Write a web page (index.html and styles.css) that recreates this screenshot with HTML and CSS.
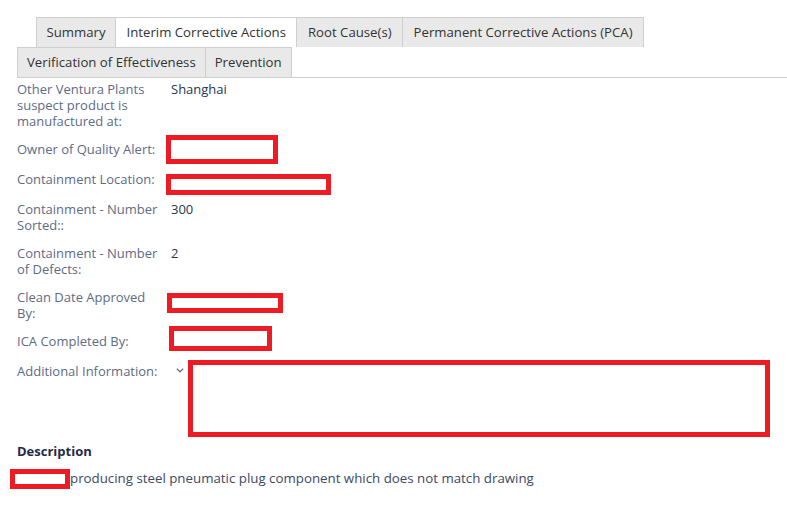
FILE: index.html
```html
<!DOCTYPE html>
<html>
<head>
<meta charset="utf-8">
<link rel="stylesheet" href="styles.css">
</head>
<body>
<div class="page">
  <div class="tabs">
    <div class="tab-row first">
      <div class="tab narrow">Summary</div>
      <div class="tab active">Interim Corrective Actions</div>
      <div class="tab">Root Cause(s)</div>
      <div class="tab">Permanent Corrective Actions (PCA)</div>
    </div>
    <div class="tab-row second">
      <div class="tab">Verification of Effectiveness</div>
      <div class="tab">Prevention</div>
    </div>
  </div>
  <div class="fields">
    <div class="row">
      <div class="label">Other Ventura Plants suspect product is manufactured at:</div>
      <div class="value">Shanghai</div>
    </div>
    <div class="row">
      <div class="label">Owner of Quality Alert:</div>
      <div class="value"><span class="redact r-owner"></span></div>
    </div>
    <div class="row">
      <div class="label">Containment Location:</div>
      <div class="value"><span class="redact r-loc"></span></div>
    </div>
    <div class="row">
      <div class="label">Containment - Number Sorted::</div>
      <div class="value">300</div>
    </div>
    <div class="row">
      <div class="label">Containment - Number of Defects:</div>
      <div class="value">2</div>
    </div>
    <div class="row">
      <div class="label">Clean Date Approved By:</div>
      <div class="value"><span class="redact r-clean"></span></div>
    </div>
    <div class="row">
      <div class="label">ICA Completed By:</div>
      <div class="value"><span class="redact r-ica"></span></div>
    </div>
    <div class="row additional">
      <div class="label">Additional Information:</div>
      <div class="value">
        <svg class="chevron" width="8" height="5" viewBox="0 0 8 5"><path d="M0.8 0.8 L4 3.8 L7.2 0.8" fill="none" stroke="#6b7280" stroke-width="1.3"/></svg>
        <span class="redact r-add"></span>
      </div>
    </div>
  </div>
  <div class="description">
    <div class="desc-title">Description</div>
    <div class="desc-text"><span class="redact r-desc"></span>producing steel pneumatic plug component which does not match drawing</div>
  </div>
</div>
</body>
</html>
```
FILE: styles.css
```css
html, body {
  margin: 0;
  padding: 0;
  background: #ffffff;
}
body {
  font-family: "Open Sans", "Noto Sans", sans-serif;
  font-size: 13px;
  color: #293550;
}
.page {
  padding: 17px 0 0 17px;
}
.tabs {
  border-bottom: 1px solid #cfcfcf;
}
.tab-row {
  display: flex;
}
.tab-row.first {
  margin-left: 19px;
}
.tab {
  background: #e9e9e9;
  border: 1px solid #cfcfcf;
  border-bottom: none;
  margin-right: -1px;
  padding: 0 9px;
  height: 29px;
  line-height: 29px;
  color: #333333;
  font-size: 13.2px;
}
.tab-row.first .tab {
  padding: 0 10.5px;
}
.tab-row.first .tab.narrow {
  padding: 0 9.5px;
}
.tab.active {
  background: #ffffff;
}
.fields {
  padding-top: 3px;
}
.row {
  display: grid;
  grid-template-columns: 154px 1fr;
  line-height: 16px;
  min-height: 18px;
  margin-bottom: 12px;
}
.label {
  color: #5e6b86;
  padding-right: 8px;
}
.value {
  position: relative;
  color: #293550;
}
.row.additional {
  min-height: 68px;
}
.chevron {
  position: absolute;
  left: 5px;
  top: 5px;
}
.redact {
  position: absolute;
  box-sizing: border-box;
  border: 5px solid #ed1c24;
  background: #ffffff;
}
.r-owner { left: -5px; top: -6px; width: 112px; height: 29px; }
.r-loc { left: -5px; top: 3px; width: 165px; height: 21px; }
.r-clean { left: -4px; top: 4px; width: 116px; height: 20px; }
.r-ica { left: -2px; top: -7px; width: 103px; height: 25px; }
.r-add { left: 17px; top: -3px; width: 582px; height: 77px; }
.desc-title {
  font-weight: 700;
  color: #1f2b4a;
  line-height: 16px;
  margin-bottom: 11px;
}
.desc-text {
  color: #3d4966;
  line-height: 16px;
  font-size: 13.3px;
}
.r-desc {
  position: relative;
  display: inline-block;
  vertical-align: top;
  width: 60px;
  height: 20px;
  margin-left: -7px;
  margin-top: -1px;
}
```
